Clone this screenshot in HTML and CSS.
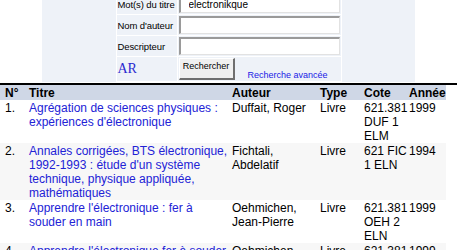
FILE: index.html
```html
<!DOCTYPE html>
<html lang="fr">

<head>
    <meta charset="UTF-8">
    <title>Recherche</title>
    <link rel="stylesheet" href="styles.css">
</head>

<body>
    <div class="search">
        <table class="search-form">
            <tr>
                <td class="lbl">Mot(s) du titre</td>
                <td class="fld"><input type="text" value="electronikque"></td>
            </tr>
            <tr>
                <td class="lbl">Nom d'auteur</td>
                <td class="fld"><input type="text"></td>
            </tr>
            <tr>
                <td class="lbl">Descripteur</td>
                <td class="fld"><input type="text"></td>
            </tr>
            <tr>
                <td class="lbl"><a class="ar" href="#">AR</a></td>
                <td class="fld">
                    <div class="actions">
                        <button type="button">Rechercher</button>
                        <a href="#">Recherche avancée</a>
                    </div>
                </td>
            </tr>
        </table>
    </div>
    <div class="rule"></div>

    <table class="results">
        <colgroup>
            <col class="c-num">
            <col class="c-title">
            <col class="c-author">
            <col class="c-type">
            <col class="c-cote">
            <col class="c-year">
        </colgroup>
        <thead>
            <tr>
                <th>N°</th>
                <th>Titre</th>
                <th>Auteur</th>
                <th>Type</th>
                <th>Cote</th>
                <th>Année</th>
            </tr>
        </thead>
        <tbody>
            <tr>
                <td>1.</td>
                <td><a href="#">Agrégation de sciences physiques : expériences d'électronique</a></td>
                <td>Duffait, Roger</td>
                <td>Livre</td>
                <td>621.381 DUF 1 ELM</td>
                <td>1999</td>
            </tr>
            <tr>
                <td>2.</td>
                <td><a href="#">Annales corrigées, BTS électronique, 1992-1993 : étude d'un système technique, physique appliquée, mathématiques</a></td>
                <td>Fichtali, Abdelatif</td>
                <td>Livre</td>
                <td>621 FIC 1 ELN</td>
                <td>1994</td>
            </tr>
            <tr>
                <td>3.</td>
                <td><a href="#">Apprendre l'électronique : fer à souder en main</a></td>
                <td>Oehmichen, Jean-Pierre</td>
                <td>Livre</td>
                <td>621.381 OEH 2 ELN</td>
                <td>1999</td>
            </tr>
            <tr>
                <td>4.</td>
                <td><a href="#">Apprendre l'électronique fer à souder en main</a></td>
                <td>Oehmichen, Jean-Pierre</td>
                <td>Livre</td>
                <td>621.381 OEH 1 ELN</td>
                <td>1999</td>
            </tr>
        </tbody>
    </table>
</body>

</html>
```

FILE: styles.css
```css
/* search panel on top, result list below */

body {
    margin: 0;
    background-color: #ffffff;
    color: #000000;
    font-family: "Liberation Sans", Arial, sans-serif;
    font-size: 12px;
}

a {
    color: #2222d6;
    text-decoration: none;
}

.search {
    width: 373px;
    margin: -7px auto 0;
    background-color: #eef2f8;
}

.search-form {
    width: 226px;
    margin: 0 auto;
    table-layout: fixed;
    border-collapse: separate;
    border-spacing: 1px;
    background-color: #ffffff;
    font-size: 10px;
}

.search-form td {
    background-color: #eef2f8;
    padding: 1px;
    height: 18px;
}

.search-form .lbl {
    width: 58px;
    white-space: nowrap;
    overflow: hidden;
    font-size: 9.5px;
    letter-spacing: -0.1px;
}

.search-form .fld {
    width: 161px;
}

.search-form input {
    box-sizing: border-box;
    display: block;
    width: 161px;
    height: 18px;
    margin: 0;
    padding: 0 8px;
    border-style: solid;
    border-width: 2px 1px 1px 2px;
    border-color: #9a9a9a #e2e2e2 #e2e2e2 #9a9a9a;
    background-color: #ffffff;
    font-family: "Liberation Sans", Arial, sans-serif;
    font-size: 10px;
}

.ar {
    color: #2a2ad0;
    font-family: "Liberation Serif", "Times New Roman", serif;
    font-size: 14px;
    letter-spacing: 0;
}

.actions {
    display: flex;
    align-items: flex-end;
}

.actions button {
    box-sizing: border-box;
    width: 56px;
    height: 22px;
    margin: 0;
    padding: 0 0 6px;
    border-style: solid;
    border-width: 1px 2px 2px 1px;
    border-color: #ffffff #6f6f6f #6f6f6f #ffffff;
    background-color: #f0f0f0;
    font-family: "Liberation Sans", Arial, sans-serif;
    font-size: 9px;
    color: #000000;
}

.actions a {
    margin-left: 13px;
    color: #2020e6;
    font-size: 9px;
    line-height: 10px;
}

.rule {
    height: 2px;
    margin-top: 1px;
    background-color: #000000;
}

/* results */
.results {
    width: 446px;
    table-layout: fixed;
    border-collapse: collapse;
    line-height: 14px;
}

.c-num { width: 29px; }
.c-title { width: 203px; }
.c-author { width: 88px; }
.c-type { width: 44px; }
.c-cote { width: 45px; }
.c-year { width: 37px; }

.results th {
    background-color: #cfd7e6;
    text-align: left;
    font-weight: bold;
    padding: 1px 0 0;
}

.results td {
    vertical-align: top;
    padding: 1px 0 0;
}

.results th:first-child,
.results td:first-child {
    padding-left: 5px;
}

.results tbody tr:nth-child(even) td {
    background-color: #f7f7f7;
}
```
